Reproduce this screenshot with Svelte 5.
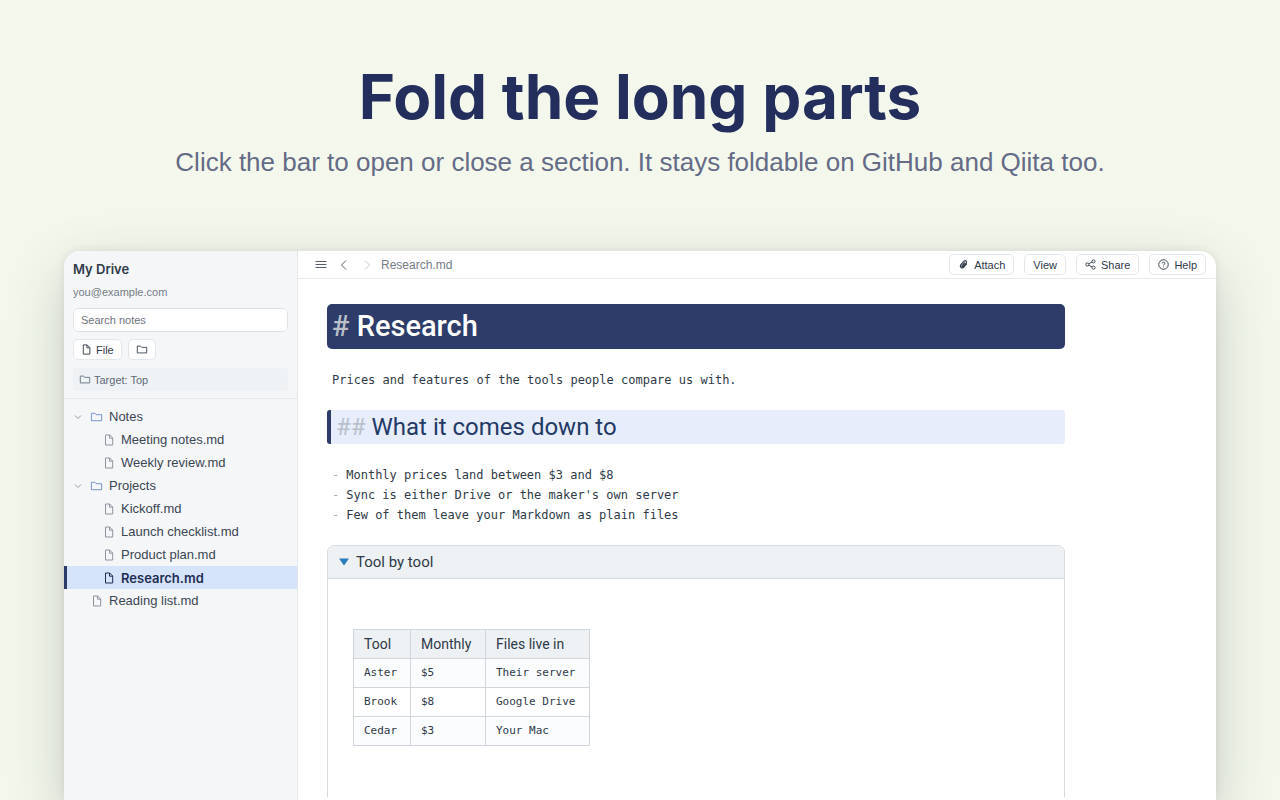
<script>
  const tree = [
    { name: 'Notes', kind: 'folder' },
    { name: 'Meeting notes.md', kind: 'file', nested: true },
    { name: 'Weekly review.md', kind: 'file', nested: true },
    { name: 'Projects', kind: 'folder' },
    { name: 'Kickoff.md', kind: 'file', nested: true },
    { name: 'Launch checklist.md', kind: 'file', nested: true },
    { name: 'Product plan.md', kind: 'file', nested: true },
    { name: 'Research.md', kind: 'file', nested: true, active: true },
    { name: 'Reading list.md', kind: 'file' }
  ];
  const points = [
    'Monthly prices land between $3 and $8',
    "Sync is either Drive or the maker's own server",
    'Few of them leave your Markdown as plain files'
  ];
  const rows = [
    ['Aster', '$5', 'Their server'],
    ['Brook', '$8', 'Google Drive'],
    ['Cedar', '$3', 'Your Mac']
  ];
</script>

{#snippet fileIcon()}
  <svg class="icon" viewBox="0 0 12 12" aria-hidden="true">
    <path d="M2.500 1h4.200l3 3v7H2.500z M6.500 1v3.200h3.200" />
  </svg>
{/snippet}

{#snippet folderIcon()}
  <svg class="icon wide" viewBox="0 0 14 12" aria-hidden="true">
    <path d="M1.500 2h3.800l1.300 1.500h5.900v6.500h-11z" />
  </svg>
{/snippet}

<main class="stage">
  <header class="hero">
    <h1>Fold the long parts</h1>
    <p>Click the bar to open or close a section. It stays foldable on GitHub and Qiita too.</p>
  </header>

  <div class="window">
    <aside class="sidebar">
      <div class="drive">
        <h2>My Drive</h2>
        <p class="email">you@example.com</p>
        <input type="search" placeholder="Search notes" aria-label="Search notes" />
        <div class="actions">
          <button class="btn">{@render fileIcon()}File</button>
          <button class="btn" aria-label="New folder">{@render folderIcon()}</button>
        </div>
        <div class="target">{@render folderIcon()}Target: Top</div>
      </div>
      <nav class="tree">
        {#each tree as item}
          <a href="#note" class="node" class:nested={item.nested} class:folder={item.kind === 'folder'} class:active={item.active}>
            {#if item.kind === 'folder'}
              <svg class="caret" viewBox="0 0 8 8" aria-hidden="true"><path d="M1 2.500l3 3 3-3" /></svg>
              {@render folderIcon()}
            {:else}
              {@render fileIcon()}
            {/if}
            <span>{item.name}</span>
          </a>
        {/each}
      </nav>
    </aside>

    <section class="pane">
      <div class="topbar">
        <div class="history">
          <button class="plain" aria-label="Menu">
            <svg viewBox="0 0 12 12" aria-hidden="true"><path d="M.5 2.500h11M.5 5.500h11M.5 8.500h11" /></svg>
          </button>
          <button class="plain" aria-label="Back">
            <svg viewBox="0 0 12 12" aria-hidden="true"><path d="M8 1.500L3.500 6 8 10.500" /></svg>
          </button>
          <button class="plain faded" aria-label="Forward">
            <svg viewBox="0 0 12 12" aria-hidden="true"><path d="M4 1.500L8.500 6 4 10.500" /></svg>
          </button>
        </div>
        <span class="crumb">Research.md</span>
        <div class="tools">
          <button class="btn">
            <svg class="icon clip" viewBox="0 0 12 12" aria-hidden="true"><path d="M9.600 5L6.200 8.900C4.200 10.700 1.500 8.700 3 6.500l3.600-4.100c1.500-1.400 3.500.3 2.300 2L5.600 8.100c-.8.800-1.700 0-1.100-.9l2.900-3.300" /></svg>Attach
          </button>
          <button class="btn">View</button>
          <button class="btn">
            <svg class="icon" viewBox="0 0 12 12" aria-hidden="true"><circle cx="2.500" cy="6" r="1.700" /><circle cx="9.300" cy="2.600" r="1.700" /><circle cx="9.300" cy="9.400" r="1.700" /><path d="M4.100 5.200l3.700-1.900M4.100 6.800l3.700 1.900" /></svg>Share
          </button>
          <button class="btn">
            <svg class="icon" viewBox="0 0 12 12" aria-hidden="true"><circle cx="6" cy="6" r="5.200" /><path d="M4.500 4.800c0-2 3-1.900 3-.1 0 1.100-1.500 1.200-1.500 2.300M6 8.300v.9" /></svg>Help
          </button>
        </div>
      </div>

      <div class="editor">
        <article>
          <h3 class="title"><span>#</span> Research</h3>
          <p>Prices and features of the tools people compare us with.</p>
          <h4 class="subtitle"><span>##</span> What it comes down to</h4>
          <ul>
            {#each points as point}
              <li><span>-</span>{point}</li>
            {/each}
          </ul>
          <details open>
            <summary>
              <svg viewBox="0 0 10 8" aria-hidden="true"><path d="M0 .5h10L5 7.500z" /></svg>Tool by tool
            </summary>
            <table>
              <thead>
                <tr><th>Tool</th><th>Monthly</th><th>Files live in</th></tr>
              </thead>
              <tbody>
                {#each rows as row}
                  <tr>{#each row as cell}<td>{cell}</td>{/each}</tr>
                {/each}
              </tbody>
            </table>
          </details>
        </article>
      </div>
    </section>
  </div>
</main>

<style>
  :global(body) {
    margin: 0;
    background: #f4f8ec;
  }
  * {
    box-sizing: border-box;
  }
  h1, h2, h3, h4, p, ul {
    margin: 0;
    padding: 0;
  }
  .stage {
    display: flex;
    flex-direction: column;
    height: 100vh;
    overflow: hidden;
    padding: 0 5%;
    font-family: "Liberation Sans", Arial, sans-serif;
    color: #2f3a48;
  }
  .hero {
    flex: none;
    padding: 59px 0 73px;
    text-align: center;
  }
  .hero h1 {
    font-family: Inter, "Liberation Sans", sans-serif;
    font-size: 62px;
    line-height: 76px;
    font-weight: 700;
    color: #232e5c;
  }
  .hero p {
    margin-top: 11px;
    font-size: 26px;
    line-height: 32px;
    color: #646b87;
  }
  .window {
    flex: 1;
    min-height: 0;
    display: flex;
    overflow: hidden;
    border-radius: 16px 16px 0 0;
    background: #fff;
    box-shadow: 0 20px 60px rgba(24, 34, 50, 0.2), 0 0 10px rgba(24, 34, 50, 0.09);
  }
  .sidebar {
    flex: none;
    width: 234px;
    background: #f4f6f8;
    border-right: 1px solid #e3e7eb;
  }
  .drive {
    display: flex;
    flex-direction: column;
    padding: 9px 9px 7px;
    border-bottom: 1px solid #e6eaee;
  }
  .drive h2 {
    font-family: Inter, "Liberation Sans", sans-serif;
    font-size: 13px;
    line-height: 18px;
    font-weight: 600;
  }
  .email {
    margin: 6px 0 8px;
    font-size: 11px;
    line-height: 16px;
    color: #757d88;
  }
  input {
    width: 100%;
    height: 24px;
    padding: 0 7px;
    border: 1px solid #e0e4e9;
    border-radius: 5px;
    background: #fff;
    font: 11px "Liberation Sans", Arial, sans-serif;
    appearance: none;
  }
  input::placeholder {
    color: #6d747e;
  }
  .actions {
    display: flex;
    gap: 6px;
    margin: 7px 0 8px;
  }
  .btn {
    display: flex;
    align-items: center;
    gap: 4px;
    height: 21px;
    padding: 0 7px;
    border: 1px solid #e3e7eb;
    border-radius: 5px;
    background: #fff;
    font: 11px "Liberation Sans", Arial, sans-serif;
    color: #2f3a48;
  }
  svg {
    flex: none;
    display: block;
    fill: none;
    stroke: currentColor;
  }
  .icon {
    width: 11px;
    height: 11px;
  }
  .icon.wide {
    width: 12px;
  }
  .clip {
    stroke-width: 1.3;
  }
  .target {
    display: flex;
    align-items: center;
    gap: 3px;
    height: 23px;
    padding: 0 6px;
    border-radius: 4px;
    background: #eef2f5;
    font-size: 11px;
    color: #5f6975;
  }
  .tree {
    padding-top: 6px;
  }
  .node {
    display: flex;
    align-items: center;
    gap: 6px;
    height: 23px;
    padding-left: 27px;
    border-left: 0 solid #2b3a68;
    font-size: 13px;
    line-height: 16px;
    color: #3c4653;
    text-decoration: none;
  }
  .node.folder {
    padding-left: 10px;
  }
  .node.nested {
    padding-left: 39px;
  }
  .node.active {
    padding-left: 36px;
    border-left-width: 3px;
    background: #d5e4fb;
    font-family: Inter, "Liberation Sans", sans-serif;
    font-weight: 600;
    color: #1f2d55;
  }
  .node .icon {
    width: 12px;
    height: 12px;
    color: #8d949d;
  }
  .node.folder .icon {
    width: 13px;
    color: #6f8ad0;
  }
  .node.active .icon {
    color: #1f2d55;
  }
  .caret {
    width: 8px;
    height: 8px;
    color: #949ba4;
    margin-right: 2px;
  }
  .pane {
    flex: 1;
    min-width: 0;
    display: flex;
    flex-direction: column;
  }
  .topbar {
    flex: none;
    display: flex;
    align-items: center;
    gap: 8px;
    height: 28px;
    padding: 0 10px 0 17px;
    border-bottom: 1px solid #e8ebee;
  }
  .history {
    display: flex;
    gap: 11px;
  }
  .plain {
    padding: 0;
    border: 0;
    background: none;
    color: #555e69;
  }
  .plain svg {
    width: 12px;
    height: 12px;
  }
  .faded {
    color: #c2c6cb;
  }
  .crumb {
    font-size: 12px;
    color: #757b84;
  }
  .tools {
    display: flex;
    gap: 10px;
    margin-left: auto;
  }
  .tools .btn {
    gap: 5px;
    padding: 0 8px;
  }
  .editor {
    flex: 1;
    min-height: 0;
    overflow: hidden;
    margin-bottom: 3px;
    padding: 25px 29px 0;
    font: 12px/20px "DejaVu Sans Mono", monospace;
    color: #2f3a48;
  }
  article {
    max-width: 738px;
  }
  .title, .subtitle, summary, th {
    font-family: Roboto, "Noto Sans", sans-serif;
    font-weight: 400;
  }
  .title, .subtitle {
    margin-bottom: 21px;
  }
  .title {
    padding: 0 5px;
    border-radius: 5px;
    background: #2d3c69;
    font-size: 29px;
    font-weight: 500;
    line-height: 45px;
    color: #fff;
  }
  .title span {
    color: #b9c0c8;
  }
  .subtitle {
    padding: 0 5px;
    border-left: 4px solid #2d3c69;
    border-radius: 3px;
    background: #e7edfb;
    font-size: 24px;
    line-height: 34px;
    color: #233a66;
  }
  .subtitle span {
    color: #b9c0cc;
  }
  article p {
    margin-bottom: 20px;
    padding-left: 5px;
  }
  ul {
    margin-bottom: 20px;
    list-style: none;
  }
  li {
    display: flex;
    gap: 7px;
    padding-left: 5px;
  }
  li span {
    color: #a4abb2;
  }
  details {
    min-height: 320px;
    border: 1px solid #d6dbe0;
    border-radius: 7px;
    overflow: hidden;
  }
  summary {
    display: flex;
    align-items: center;
    gap: 7px;
    padding: 0 11px;
    border-bottom: 1px solid #d6dbe0;
    background: #edf1f4;
    font-size: 15px;
    line-height: 32px;
  }
  summary svg {
    width: 10px;
    height: 8px;
    fill: #2a7dbd;
    stroke: none;
  }
  table {
    margin: 50px 25px;
    border-collapse: collapse;
  }
  th, td {
    height: 29px;
    padding: 0 10px;
    border: 1px solid #d1d6dc;
    text-align: left;
  }
  th {
    background: #edf1f4;
    font-size: 14px;
  }
  td {
    font-size: 11px;
  }
  th:nth-child(1) {
    width: 57px;
  }
  th:nth-child(2) {
    width: 75px;
  }
  th:nth-child(3) {
    width: 104px;
  }
  tbody tr:nth-child(odd) {
    background: #fafcfd;
  }
</style>
